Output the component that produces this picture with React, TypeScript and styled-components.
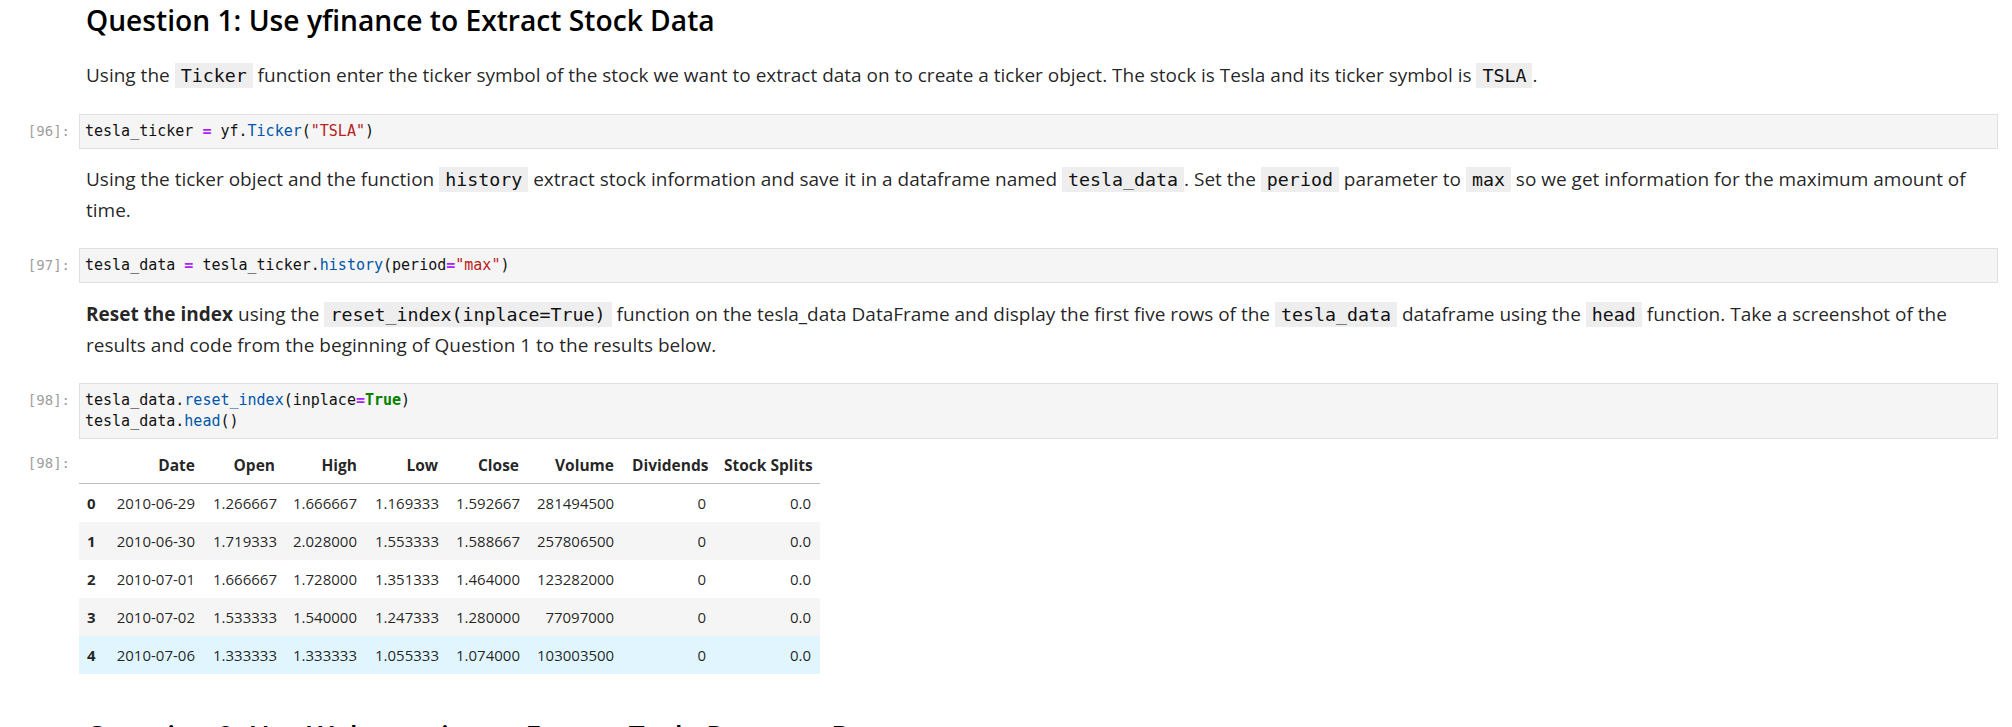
import React from 'react';
import styled, {createGlobalStyle} from 'styled-components';

const GlobalStyle = createGlobalStyle`
  body {
    margin: 0;
    background: #fff;
    font-family: "Open Sans", "Noto Sans", sans-serif;
    color: rgba(0, 0, 0, 0.87);
  }
`;

const Notebook = styled.main`
  display: flex;
  flex-direction: column;
  width: 2012px;
  height: 727px;
  overflow: hidden;
  padding-right: 14px;
  box-sizing: border-box;
`;

const Cell = styled.div<{$gap: number}>`
  display: grid;
  grid-template-columns: 79px 1fr;
  margin-top: ${p => p.$gap}px;
`;

const Prompt = styled.div`
  font-family: "DejaVu Sans Mono", monospace;
  font-size: 14px;
  line-height: 21px;
  color: #9e9e9e;
  text-align: right;
  padding: 7px 9px 0 0;
`;

const Markdown = styled.div`
  grid-column: 2;
  padding: 0 7px;
`;

const Heading = styled.h2`
  margin: 0;
  font-size: 28.2px;
  font-weight: 600;
  line-height: 34px;
  color: #000;
  white-space: nowrap;
`;

const Para = styled.p`
  margin: 0;
  font-size: 19px;
  line-height: 30px;
`;

const InlineCode = styled.code`
  font-family: "DejaVu Sans Mono", monospace;
  font-size: 18.3px;
  background: #eeeeee;
  padding: 2px 6px;
  color: #111;
`;

const CodeBox = styled.pre`
  margin: 0;
  background: #f5f5f5;
  border: 1px solid #e0e0e0;
  padding: 6px 5px;
  font-family: "DejaVu Sans Mono", monospace;
  font-size: 15px;
  line-height: 21px;
  color: #111;
`;

const Tok = styled.span<{$kind: 'op' | 'prop' | 'str' | 'kw'}>`
  color: ${p => ({op: '#aa22ff', prop: '#0055aa', str: '#ba2121', kw: '#008000'})[p.$kind]};
  font-weight: ${p => (p.$kind === 'op' || p.$kind === 'kw' ? 700 : 400)};
`;

const Output = styled.div`
  padding-top: 0;
`;

const Table = styled.table`
  width: 741px;
  border-collapse: collapse;
  table-layout: fixed;
  font-family: "Open Sans", "Noto Sans", sans-serif;
  font-size: 15px;
  color: rgba(0, 0, 0, 0.87);
`;

const Th = styled.th<{$left?: boolean}>`
  height: 37px;
  padding: 0 9px;
  text-align: ${p => (p.$left ? 'left' : 'right')};
  font-weight: 700;
  font-size: 15.5px;
  white-space: nowrap;
  border-bottom: 1px solid #bdbdbd;
`;

const Row = styled.tr<{$shade: 'none' | 'odd' | 'hover'}>`
  background: ${p => ({none: '#fff', odd: '#f5f5f5', hover: '#e1f5fe'})[p.$shade]};
`;

const Td = styled.td<{$index?: boolean}>`
  height: 38px;
  padding: 0 9px 0 ${p => (p.$index ? 8 : 9)}px;
  text-align: ${p => (p.$index ? 'left' : 'right')};
  font-weight: ${p => (p.$index ? 700 : 400)};
  white-space: nowrap;
`;

const columns = ['Date', 'Open', 'High', 'Low', 'Close', 'Volume', 'Dividends', 'Stock Splits'];
const widths = [25, 100, 80, 82, 81, 81, 95, 92, 105];

const rows = [
  ['2010-06-29', '1.266667', '1.666667', '1.169333', '1.592667', '281494500', '0', '0.0'],
  ['2010-06-30', '1.719333', '2.028000', '1.553333', '1.588667', '257806500', '0', '0.0'],
  ['2010-07-01', '1.666667', '1.728000', '1.351333', '1.464000', '123282000', '0', '0.0'],
  ['2010-07-02', '1.533333', '1.540000', '1.247333', '1.280000', '77097000', '0', '0.0'],
  ['2010-07-06', '1.333333', '1.333333', '1.055333', '1.074000', '103003500', '0', '0.0'],
];

export default function App() {
  return (
    <>
      <GlobalStyle />
      <Notebook>
        <Cell $gap={3}>
          <Markdown>
            <Heading>Question 1: Use yfinance to Extract Stock Data</Heading>
          </Markdown>
        </Cell>

        <Cell $gap={23}>
          <Markdown>
            <Para>
              Using the <InlineCode>Ticker</InlineCode> function enter the ticker symbol of the stock we want to
              extract data on to create a ticker object. The stock is Tesla and its ticker symbol is{' '}
              <InlineCode>TSLA</InlineCode>.
            </Para>
          </Markdown>
        </Cell>

        <Cell $gap={23}>
          <Prompt>[96]:</Prompt>
          <CodeBox>
            tesla_ticker <Tok $kind="op">=</Tok> yf.<Tok $kind="prop">Ticker</Tok>(<Tok $kind="str">"TSLA"</Tok>)
          </CodeBox>
        </Cell>

        <Cell $gap={15}>
          <Markdown>
            <Para>
              Using the ticker object and the function <InlineCode>history</InlineCode> extract stock information
              and save it in a dataframe named <InlineCode>tesla_data</InlineCode>. Set the{' '}
              <InlineCode>period</InlineCode> parameter to <InlineCode>max</InlineCode> so we get information for
              the maximum amount of time.
            </Para>
          </Markdown>
        </Cell>

        <Cell $gap={23}>
          <Prompt>[97]:</Prompt>
          <CodeBox>
            tesla_data <Tok $kind="op">=</Tok> tesla_ticker.<Tok $kind="prop">history</Tok>(period
            <Tok $kind="op">=</Tok>
            <Tok $kind="str">"max"</Tok>)
          </CodeBox>
        </Cell>

        <Cell $gap={16}>
          <Markdown>
            <Para>
              <b>Reset the index</b> using the <InlineCode>reset_index(inplace=True)</InlineCode> function on the
              tesla_data DataFrame and display the first five rows of the <InlineCode>tesla_data</InlineCode>{' '}
              dataframe using the <InlineCode>head</InlineCode> function. Take a screenshot of the results and code
              from the beginning of Question 1 to the results below.
            </Para>
          </Markdown>
        </Cell>

        <Cell $gap={23}>
          <Prompt>[98]:</Prompt>
          <CodeBox>
            tesla_data.<Tok $kind="prop">reset_index</Tok>(inplace<Tok $kind="op">=</Tok>
            <Tok $kind="kw">True</Tok>)
            {'\n'}tesla_data.<Tok $kind="prop">head</Tok>()
          </CodeBox>
        </Cell>

        <Cell $gap={7}>
          <Prompt>[98]:</Prompt>
          <Output>
            <Table>
              <colgroup>
                {widths.map((w, i) => (
                  <col key={i} style={{width: w}} />
                ))}
              </colgroup>
              <thead>
                <tr>
                  <Th $left />
                  {columns.map(c => (
                    <Th key={c}>{c}</Th>
                  ))}
                </tr>
              </thead>
              <tbody>
                {rows.map((r, i) => (
                  <Row key={i} $shade={i === 4 ? 'hover' : i % 2 ? 'odd' : 'none'}>
                    <Td $index>{i}</Td>
                    {r.map((v, j) => (
                      <Td key={j}>{v}</Td>
                    ))}
                  </Row>
                ))}
              </tbody>
            </Table>
          </Output>
        </Cell>

        <Cell $gap={45}>
          <Markdown>
            <Heading>Question 2: Use Webscraping to Extract Tesla Revenue Data</Heading>
          </Markdown>
        </Cell>
      </Notebook>
    </>
  );
}
